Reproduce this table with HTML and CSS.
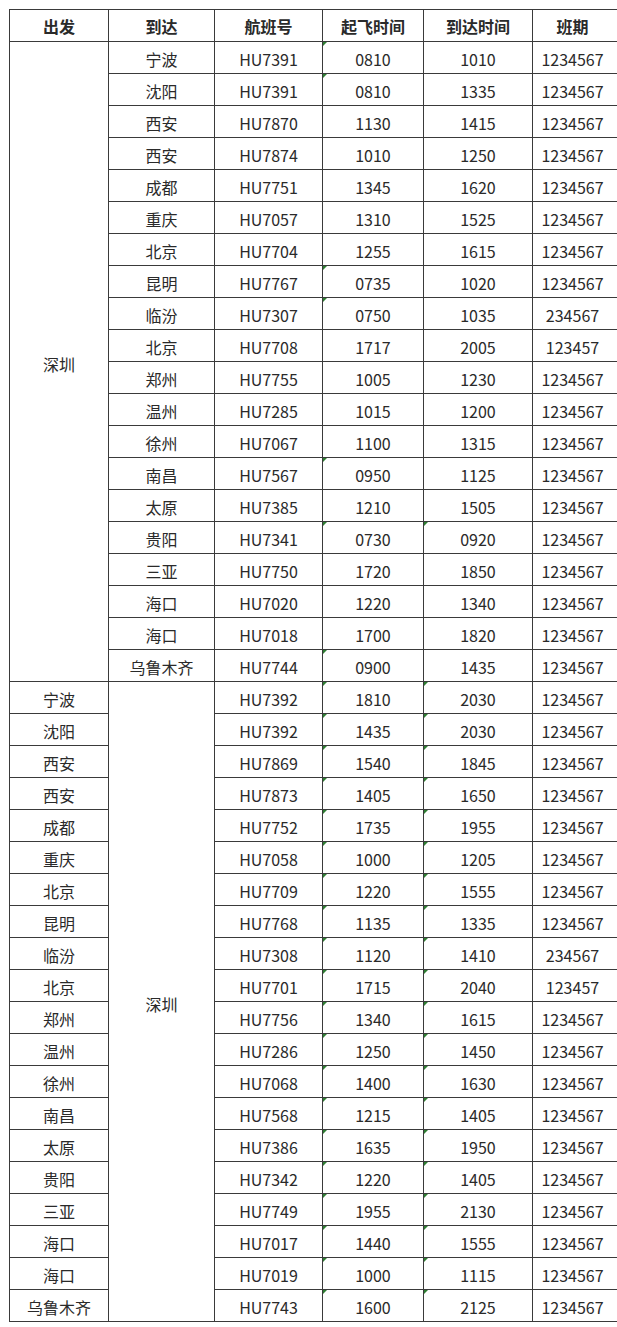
FILE: index.html
```html
<!DOCTYPE html>
<html lang="zh">
<head>
<meta charset="utf-8">
<title>航班时刻表</title>
<link rel="stylesheet" href="styles.css">
</head>
<body>
<div class="wrap">
<table class="sched">
<colgroup>
<col class="c1"><col class="c2"><col class="c3"><col class="c4"><col class="c5"><col class="c6">
</colgroup>
<thead>
<tr><th>出发</th><th>到达</th><th>航班号</th><th>起飞时间</th><th>到达时间</th><th class="last">班期</th></tr>
</thead>
<tbody>
<tr><td rowspan="20" class="merge">深圳</td><td>宁波</td><td>HU7391</td><td class="t">0810</td><td>1010</td><td class="last">1234567</td></tr>
<tr><td>沈阳</td><td>HU7391</td><td class="t">0810</td><td>1335</td><td class="last">1234567</td></tr>
<tr><td>西安</td><td>HU7870</td><td>1130</td><td>1415</td><td class="last">1234567</td></tr>
<tr><td>西安</td><td>HU7874</td><td>1010</td><td>1250</td><td class="last">1234567</td></tr>
<tr><td>成都</td><td>HU7751</td><td>1345</td><td>1620</td><td class="last">1234567</td></tr>
<tr><td>重庆</td><td>HU7057</td><td>1310</td><td>1525</td><td class="last">1234567</td></tr>
<tr><td>北京</td><td>HU7704</td><td>1255</td><td>1615</td><td class="last">1234567</td></tr>
<tr><td>昆明</td><td>HU7767</td><td class="t">0735</td><td>1020</td><td class="last">1234567</td></tr>
<tr><td>临汾</td><td>HU7307</td><td class="t">0750</td><td>1035</td><td class="last">234567</td></tr>
<tr><td>北京</td><td>HU7708</td><td>1717</td><td>2005</td><td class="last">123457</td></tr>
<tr><td>郑州</td><td>HU7755</td><td>1005</td><td>1230</td><td class="last">1234567</td></tr>
<tr><td>温州</td><td>HU7285</td><td>1015</td><td>1200</td><td class="last">1234567</td></tr>
<tr><td>徐州</td><td>HU7067</td><td>1100</td><td>1315</td><td class="last">1234567</td></tr>
<tr><td>南昌</td><td>HU7567</td><td class="t">0950</td><td>1125</td><td class="last">1234567</td></tr>
<tr><td>太原</td><td>HU7385</td><td>1210</td><td>1505</td><td class="last">1234567</td></tr>
<tr><td>贵阳</td><td>HU7341</td><td class="t">0730</td><td class="t">0920</td><td class="last">1234567</td></tr>
<tr><td>三亚</td><td>HU7750</td><td>1720</td><td>1850</td><td class="last">1234567</td></tr>
<tr><td>海口</td><td>HU7020</td><td>1220</td><td>1340</td><td class="last">1234567</td></tr>
<tr><td>海口</td><td>HU7018</td><td>1700</td><td>1820</td><td class="last">1234567</td></tr>
<tr><td>乌鲁木齐</td><td>HU7744</td><td class="t">0900</td><td>1435</td><td class="last">1234567</td></tr>

<tr><td>宁波</td><td rowspan="20" class="merge">深圳</td><td>HU7392</td><td class="t">1810</td><td class="t">2030</td><td class="last">1234567</td></tr>
<tr><td>沈阳</td><td>HU7392</td><td class="t">1435</td><td class="t">2030</td><td class="last">1234567</td></tr>
<tr><td>西安</td><td>HU7869</td><td class="t">1540</td><td class="t">1845</td><td class="last">1234567</td></tr>
<tr><td>西安</td><td>HU7873</td><td class="t">1405</td><td class="t">1650</td><td class="last">1234567</td></tr>
<tr><td>成都</td><td>HU7752</td><td class="t">1735</td><td class="t">1955</td><td class="last">1234567</td></tr>
<tr><td>重庆</td><td>HU7058</td><td class="t">1000</td><td class="t">1205</td><td class="last">1234567</td></tr>
<tr><td>北京</td><td>HU7709</td><td class="t">1220</td><td class="t">1555</td><td class="last">1234567</td></tr>
<tr><td>昆明</td><td>HU7768</td><td class="t">1135</td><td class="t">1335</td><td class="last">1234567</td></tr>
<tr><td>临汾</td><td>HU7308</td><td class="t">1120</td><td class="t">1410</td><td class="last">234567</td></tr>
<tr><td>北京</td><td>HU7701</td><td class="t">1715</td><td class="t">2040</td><td class="last">123457</td></tr>
<tr><td>郑州</td><td>HU7756</td><td class="t">1340</td><td class="t">1615</td><td class="last">1234567</td></tr>
<tr><td>温州</td><td>HU7286</td><td class="t">1250</td><td class="t">1450</td><td class="last">1234567</td></tr>
<tr><td>徐州</td><td>HU7068</td><td class="t">1400</td><td class="t">1630</td><td class="last">1234567</td></tr>
<tr><td>南昌</td><td>HU7568</td><td class="t">1215</td><td class="t">1405</td><td class="last">1234567</td></tr>
<tr><td>太原</td><td>HU7386</td><td class="t">1635</td><td class="t">1950</td><td class="last">1234567</td></tr>
<tr><td>贵阳</td><td>HU7342</td><td class="t">1220</td><td class="t">1405</td><td class="last">1234567</td></tr>
<tr><td>三亚</td><td>HU7749</td><td class="t">1955</td><td class="t">2130</td><td class="last">1234567</td></tr>
<tr><td>海口</td><td>HU7017</td><td class="t">1440</td><td class="t">1555</td><td class="last">1234567</td></tr>
<tr><td>海口</td><td>HU7019</td><td class="t">1000</td><td class="t">1115</td><td class="last">1234567</td></tr>
<tr><td>乌鲁木齐</td><td>HU7743</td><td class="t">1600</td><td class="t">2125</td><td class="last">1234567</td></tr>
</tbody>
</table>
</div>
</body>
</html>
```
FILE: styles.css
```css
html, body {
  margin: 0;
  padding: 0;
  background: #fff;
}
.wrap {
  width: 617px;
  overflow: hidden;
  padding: 9px 0 0 9px;
  box-sizing: border-box;
}
.sched {
  border-collapse: collapse;
  table-layout: fixed;
  width: 611px;
  font-family: "Noto Sans CJK SC", "Noto Sans", sans-serif;
  font-size: 16px;
  color: #2a2a2a;
}
.c1 { width: 99px; }
.c2 { width: 106px; }
.c3 { width: 108px; }
.c4 { width: 101px; }
.c5 { width: 109px; }
.c6 { width: 88px; }
.sched th, .sched td {
  border: 1px solid #3a3a3a;
  height: 32px;
  padding: 3px 0 0 0;
  box-sizing: border-box;
  text-align: center;
  vertical-align: middle;
  line-height: 20px;
  white-space: nowrap;
}
.sched th {
  font-weight: bold;
  padding-top: 1px;
}
.sched .last {
  padding-right: 8px;
}
.sched td.merge {
  padding-top: 4px;
}
.sched td.t {
  position: relative;
}
.sched td.t::before {
  content: "";
  position: absolute;
  left: 0;
  top: 0;
  width: 0;
  height: 0;
  border-top: 4px solid #2e7d32;
  border-right: 4px solid transparent;
}
```
